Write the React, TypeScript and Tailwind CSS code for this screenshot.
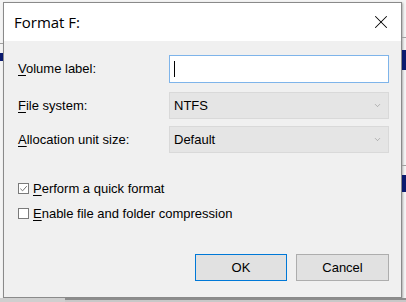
import { X, ChevronDown } from "lucide-react"

const ui = { fontFamily: '"Liberation Sans", Arial, sans-serif' }
const title = { fontFamily: '"Open Sans", "Noto Sans", sans-serif' }

function Key({ k, rest }: { k: string; rest: string }) {
  return (
    <span>
      <span className="underline underline-offset-2 decoration-1">{k}</span>
      {rest}
    </span>
  )
}

function Combo({ value }: { value: string }) {
  return (
    <div className="flex h-[27px] w-[220px] items-center justify-between border border-[#d9d9d9] bg-[#e5e5e5] pl-[4px] pr-[6px] text-[13px] text-black">
      <span>{value}</span>
      <ChevronDown className="h-[9px] w-[9px] text-[#8a8a8a]" strokeWidth={1.5} />
    </div>
  )
}

function Check({ checked, k, rest }: { checked?: boolean; k: string; rest: string }) {
  return (
    <div className="flex h-[15px] items-center gap-[4px] text-[13px] leading-[15px] text-black">
      <div className="flex h-[11px] w-[11px] items-center justify-center border border-[#7a7a7a] bg-white">
        {checked && (
          <svg viewBox="0 0 10 10" className="h-[9px] w-[9px]">
            <path d="M1.5 5.2 L4 7.6 L8.6 2.4" fill="none" stroke="#6f6f6f" strokeWidth="1.1" />
          </svg>
        )}
      </div>
      <Key k={k} rest={rest} />
    </div>
  )
}

export default function App() {
  return (
    <div className="relative h-[302px] w-[406px] overflow-hidden bg-[#f4f4f4]" style={ui}>
      {/* desktop slivers behind the dialog */}
      <div className="absolute left-0 top-[43px] h-px w-[3px] bg-[#a0a0a0]" />
      <div className="absolute left-0 top-[53px] h-[8px] w-[3px] bg-[#0a1a6e]" />
      <div className="absolute right-0 top-[37px] h-px w-[4px] bg-[#a0a0a0]" />
      <div className="absolute right-0 top-[50px] h-[20px] w-[4px] bg-[#0a1a6e]" />
      <div className="absolute right-0 top-[165px] h-px w-[4px] bg-[#a0a0a0]" />
      <div className="absolute right-0 top-[175px] h-[17px] w-[4px] bg-[#0a1a6e]" />
      <div className="absolute left-0 top-[298px] h-[4px] w-[65px] bg-[#cfcfcf]" />
      <div className="absolute left-[65px] top-[298px] h-[2px] w-[341px] bg-[#8c8c8c]" />
      <div className="absolute left-[65px] top-[300px] h-[2px] w-[341px] bg-[#c8c8c8]" />

      <div className="ml-[3px] mt-[2px] flex h-[296px] w-[399px] flex-col border border-[#8a8a8a] bg-[#f0f0f0] shadow-[1px_1px_2px_rgba(0,0,0,0.3)]">
        <div className="flex h-[38px] items-center justify-between bg-white pl-[10px] pr-[9px]">
          <span className="text-[15px] text-black" style={title}>Format F:</span>
          <X className="h-[22px] w-[22px] text-black" strokeWidth={1.1} />
        </div>

        <div className="flex flex-col pl-[14px] pr-[12px] pt-[14px]">
          <div className="flex h-[28px] items-center justify-between">
            <span className="text-[13px] text-black"><Key k="V" rest="olume label:" /></span>
            <div className="flex h-[28px] w-[220px] items-center border border-[#7eb4ea] bg-white pl-[4px]">
              <div className="h-[16px] w-px bg-black" />
            </div>
          </div>
          <div className="mt-[9px] flex items-center justify-between">
            <span className="text-[13px] text-black"><Key k="F" rest="ile system:" /></span>
            <Combo value="NTFS" />
          </div>
          <div className="mt-[7px] flex items-center justify-between">
            <span className="text-[13px] text-black"><Key k="A" rest="llocation unit size:" /></span>
            <Combo value="Default" />
          </div>

          <div className="mt-[28px] flex flex-col gap-[10px]">
            <Check checked k="P" rest="erform a quick format" />
            <Check k="E" rest="nable file and folder compression" />
          </div>

          <div className="mt-[33px] flex justify-end gap-[9px]">
            <button className="h-[27px] w-[92px] border border-[#0078d7] bg-[#e1e1e1] text-[13px] text-black">OK</button>
            <button className="h-[27px] w-[93px] border border-[#adadad] bg-[#e1e1e1] text-[13px] text-black">Cancel</button>
          </div>
        </div>
      </div>
    </div>
  )
}
